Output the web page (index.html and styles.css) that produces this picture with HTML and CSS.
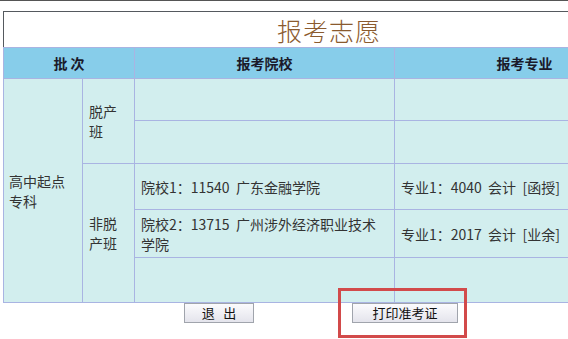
FILE: index.html
```html
<!DOCTYPE html>
<html lang="zh">
<head>
<meta charset="utf-8">
<link rel="stylesheet" href="styles.css">
</head>
<body>
<div class="page">
  <table class="grid">
    <colgroup>
      <col class="c1"><col class="c2"><col class="c3"><col class="c4">
    </colgroup>
    <tr class="title-row"><td colspan="4" class="title">报考志愿</td></tr>
    <tr class="head-row">
      <th colspan="2">批 次</th>
      <th>报考院校</th>
      <th>报考专业</th>
    </tr>
    <tr class="r1">
      <td rowspan="5" class="level">高中起点专科</td>
      <td rowspan="2" class="mode">脱产班</td>
      <td></td><td></td>
    </tr>
    <tr class="r2"><td></td><td></td></tr>
    <tr class="r3">
      <td rowspan="3" class="mode">非脱产班</td>
      <td>院校1：11540&nbsp;&nbsp;广东金融学院</td>
      <td>专业1：4040&nbsp;&nbsp;会计&nbsp;&nbsp;[函授]</td>
    </tr>
    <tr class="r4">
      <td>院校2：13715&nbsp;&nbsp;广州涉外经济职业技术学院</td>
      <td>专业1：2017&nbsp;&nbsp;会计&nbsp;&nbsp;[业余]</td>
    </tr>
    <tr class="r5"><td></td><td></td></tr>
  </table>
  <div class="actions">
    <button class="btn btn-exit">退&nbsp;&nbsp;&nbsp;出</button>
    <button class="btn btn-print">打印准考证</button>
  </div>
  <div class="highlight"></div>
</div>
</body>
</html>
```
FILE: styles.css
```css
html {
  overflow: hidden;
}
html, body {
  margin: 0;
  padding: 0;
  background: #ffffff;
}
body {
  font-family: "Noto Sans CJK SC", "Noto Sans", sans-serif;
  border-top: 1px solid #555555;
}
.page {
  position: relative;
  width: 700px;
  height: 338px;
  padding: 10px 0 0 3px;
  box-sizing: border-box;
}
.grid {
  border-collapse: collapse;
  table-layout: fixed;
  width: 651px;
  border: 1px solid #55595e;
}
.c1 { width: 79px; }
.c2 { width: 52px; }
.c3 { width: 260px; }
.c4 { width: 260px; }
.grid td, .grid th {
  border: 1px solid #a9b4e2;
  padding: 0 6px;
  font-size: 14px;
  line-height: 20px;
  color: #333333;
  text-align: left;
  vertical-align: middle;
  background: #d2eeee;
  font-weight: normal;
}
.grid td.title {
  background: #ffffff;
  border-color: #55595e;
  text-align: center;
  font-size: 25px;
  color: #8a5a2e;
  letter-spacing: 1px;
  font-weight: 300;
  border-bottom: 1px solid #a9b4e2;
}
.title-row { height: 36px; }
.head-row { height: 31px; }
.grid th {
  background: #87cdea;
  text-align: center;
  font-weight: bold;
  color: #1a1a2a;
}
.r1 { height: 42px; }
.r2 { height: 43px; }
.r3 { height: 46px; }
.r4 { height: 48px; }
.r5 { height: 45px; }
.grid td.level { padding: 0 6px 0 5px; }
.grid td.mode { padding: 0 6px; }
.actions {
  display: flex;
  gap: 98px;
  padding-left: 181px;
}
.btn {
  font-family: "Noto Sans CJK SC", sans-serif;
  font-size: 13px;
  height: 20px;
  line-height: 16px;
  padding: 0;
  border: 1px solid #a0a4ac;
  background: linear-gradient(#fbfbfd, #e4e4ec);
  color: #111111;
}
.btn-exit { width: 70px; }
.btn-print { width: 106px; }
.highlight {
  position: absolute;
  left: 338px;
  top: 287px;
  width: 129px;
  height: 50px;
  box-sizing: border-box;
  border: 3px solid #d24a4a;
}
```
